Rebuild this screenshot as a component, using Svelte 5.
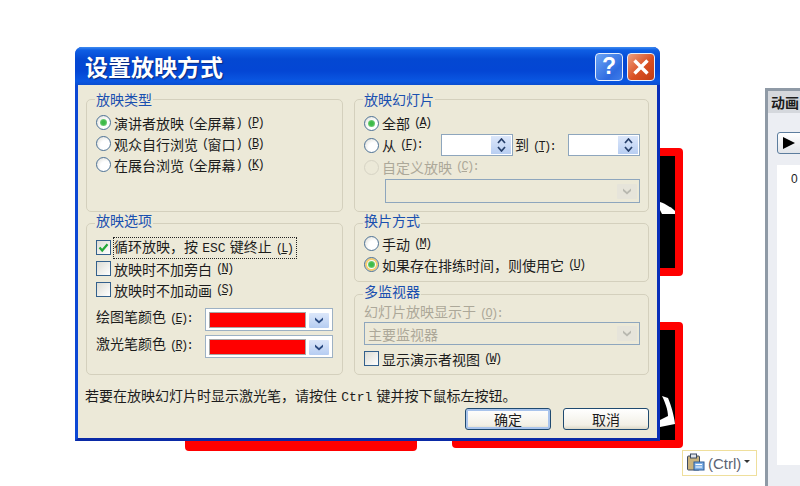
<script>
  const chevron = 'M1 1.5 L5 5 L9 1.5 L9 4 L5 7.5 L1 4 Z';
</script>

{#snippet arrow(disabled)}
  <span class="drop" class:off={disabled}>
    <svg width="10" height="9" viewBox="0 0 10 9" aria-hidden="true"><path d={chevron} fill={disabled ? '#b8b8b0' : '#2a4a80'} /></svg>
  </span>
{/snippet}

{#snippet spinner()}
  <span class="spin-field">
    <span class="spin">
      <svg width="9" height="6" viewBox="0 0 9 6"><path d="M1 5 L4.5 1 L8 5" fill="none" stroke="#27406b" stroke-width="1.7" /></svg>
      <svg width="9" height="6" viewBox="0 0 9 6"><path d="M1 1 L4.5 5 L8 1" fill="none" stroke="#27406b" stroke-width="1.7" /></svg>
    </span>
  </span>
{/snippet}

<main class="desk">
  <div class="shape shape-a"></div>
  <div class="shape shape-b"></div>
  <div class="shape shape-c"></div>
  <svg class="marks" width="30" height="250" viewBox="0 0 30 250" aria-hidden="true">
    <path d="M0 15 C6 17 12 21 15 24 L15 27 L2 27 L0 23 Z" fill="#fff" />
    <path d="M2 209 L8 211 C11 218 14 228 15 237 L0 240 L0 233 L8 229 C8 223 5 215 2 209 Z" fill="#fff" />
  </svg>

  <aside class="panel">
    <div class="panel-title">动画</div>
    <div class="panel-body">
      <div class="play"><span class="tri"></span></div>
      <div class="list">0</div>
    </div>
  </aside>

  <div class="paste">
    <svg width="20" height="20" viewBox="0 0 20 20" aria-hidden="true">
      <rect x="1.5" y="3" width="12" height="14" rx="1" fill="#c9b27c" stroke="#3c4a60" />
      <rect x="4.5" y="1" width="6" height="4" fill="#dfe3ea" stroke="#3c4a60" />
      <rect x="8" y="9" width="10" height="8" fill="#7fb0e6" stroke="#2d5a96" />
      <path d="M9.5 11.5 H16 M9.5 14 H16" stroke="#fff" />
    </svg>
    <span>(Ctrl)</span>
    <i class="caret"></i>
  </div>

  <section class="dialog">
    <header class="titlebar">
      <h1>设置放映方式</h1>
      <div class="caps">
        <span class="cap help">?</span>
        <span class="cap close">
          <svg width="18" height="18" viewBox="0 0 18 18" aria-hidden="true"><path d="M2.5 2.5 L15.5 15.5 M15.5 2.5 L2.5 15.5" stroke="#fff" stroke-width="3.4" /></svg>
        </span>
      </div>
    </header>

    <div class="body">
      <div class="cols">
        <div class="col">
          <fieldset class="h-type">
            <legend>放映类型</legend>
            <div class="row r21"><i class="radio on"></i>演讲者放映<span class="m">(</span>全屏幕<span class="m c">) (<u>P</u>)</span></div>
            <div class="row r21"><i class="radio"></i>观众自行浏览<span class="m">(</span>窗口<span class="m c">) (<u>B</u>)</span></div>
            <div class="row r21"><i class="radio"></i>在展台浏览<span class="m">(</span>全屏幕<span class="m c">) (<u>K</u>)</span></div>
          </fieldset>
          <fieldset class="h-opts">
            <legend>放映选项</legend>
            <div class="row r21"><i class="check on"><svg width="13" height="13" viewBox="0 0 13 13" aria-hidden="true"><path d="M2.5 6.5 L5.2 9.5 L10.5 3.2" fill="none" stroke="#22a838" stroke-width="2.2" /></svg></i><span class="focus">循环放映，按 <span class="esc">ESC</span> 键终止<span class="m">(<u>L</u>)</span></span></div>
            <div class="row r21"><i class="check"></i>放映时不加旁白<span class="m">(<u>N</u>)</span></div>
            <div class="row r21"><i class="check"></i>放映时不加动画<span class="m">(<u>S</u>)</span></div>
            <div class="color-row first"><span class="color-label">绘图笔颜色<span class="m">(<u>E</u>):</span></span><span class="color-combo"><span class="swatch"></span>{@render arrow(false)}</span></div>
            <div class="color-row"><span class="color-label">激光笔颜色<span class="m">(<u>R</u>):</span></span><span class="color-combo"><span class="swatch"></span>{@render arrow(false)}</span></div>
          </fieldset>
        </div>

        <div class="col">
          <fieldset class="h-type">
            <legend>放映幻灯片</legend>
            <div class="row r22"><i class="radio on"></i>全部<span class="m">(<u>A</u>)</span></div>
            <div class="row r22">
              <span class="from"><i class="radio"></i>从<span class="m">(<u>F</u>):</span></span>
              {@render spinner()}
              <span class="to">到<span class="m">(<u>T</u>):</span></span>
              {@render spinner()}
            </div>
            <div class="row r22 dim"><i class="radio off"></i>自定义放映<span class="m">(<u>C</u>):</span></div>
            <div class="wide-combo indent">{@render arrow(true)}</div>
          </fieldset>
          <fieldset class="h-adv">
            <legend>换片方式</legend>
            <div class="row r21"><i class="radio"></i>手动<span class="m">(<u>M</u>)</span></div>
            <div class="row r21"><i class="radio on amber"></i>如果存在排练时间，则使用它<span class="m">(<u>U</u>)</span></div>
          </fieldset>
          <fieldset class="h-mon">
            <legend>多监视器</legend>
            <div class="mon-label dim">幻灯片放映显示于<span class="m">(<u>O</u>):</span></div>
            <div class="wide-combo dim"><span class="combo-text">主要监视器</span>{@render arrow(true)}</div>
            <div class="row r21 mon-check"><i class="check"></i>显示演示者视图<span class="m">(<u>W</u>)</span></div>
          </fieldset>
        </div>
      </div>

      <p class="note">若要在放映幻灯片时显示激光笔，请按住 <span class="esc">Ctrl</span> 键并按下鼠标左按钮。</p>

      <div class="actions">
        <button type="button">确定</button>
        <button type="button">取消</button>
      </div>
    </div>
  </section>
</main>

<style>
  :global(body) { margin: 0; background: #fff; }

  .desk {
    position: relative;
    width: 800px;
    height: 486px;
    overflow: hidden;
    background: #fff;
    font-family: "Noto Sans CJK SC", "Liberation Sans", sans-serif;
    font-size: 14px;
    color: #1c1c1c;
  }

  .shape { position: absolute; background: #000; border: 8px solid #f00; border-radius: 4px; box-sizing: border-box; }
  .shape-a { left: 500px; top: 148px; width: 183px; height: 128px; }
  .shape-b { left: 452px; top: 322px; width: 231px; height: 126px; }
  .shape-c { left: 185px; top: 400px; width: 232px; height: 51px; background: #f00; }
  .marks { position: absolute; left: 660px; top: 187px; }

  .panel {
    position: absolute;
    left: 765px;
    top: 88px;
    width: 60px;
    height: 410px;
    box-sizing: border-box;
    border: 3px solid #8f9aa6;
    background: #eceef3;
  }
  .panel-title {
    height: 22px;
    padding-left: 3px;
    background: #d5d8dd;
    font-weight: 700;
    font-size: 14px;
    line-height: 23px;
    white-space: nowrap;
  }
  .panel-body { padding: 19px 0 0 9px; }
  .play {
    width: 40px;
    height: 20px;
    border: 1px solid #5c7d9e;
    border-radius: 3px;
    background: linear-gradient(#fff, #e2e5ea);
    display: flex;
    align-items: center;
    padding-left: 5px;
  }
  .tri { width: 0; height: 0; border-left: 12px solid #000; border-top: 6px solid transparent; border-bottom: 6px solid transparent; }
  .list {
    margin-top: 11px;
    height: 300px;
    background: #fff;
    font: 12px/28px "Liberation Sans", sans-serif;
    padding-left: 14px;
  }

  .paste {
    position: absolute;
    left: 682px;
    top: 450px;
    width: 75px;
    height: 26px;
    box-sizing: border-box;
    border: 1px solid #efdf9c;
    background: #fff;
    display: flex;
    align-items: center;
    padding-left: 3px;
    gap: 2px;
    font: 15px "Liberation Sans", sans-serif;
    color: #5c6472;
  }
  .caret { width: 0; height: 0; margin-left: 1px; margin-top: -3px; border-left: 3px solid transparent; border-right: 3px solid transparent; border-top: 3px solid #333; }

  .dialog {
    position: absolute;
    left: 75px;
    top: 47px;
    width: 585px;
    height: 394px;
    box-sizing: border-box;
    display: flex;
    flex-direction: column;
    border-radius: 7px 7px 0 0;
    background: #0a3fd0;
    border-bottom: 3px solid #0a2aa6;
    border-right: 3px solid #0a2fb8;
    border-left: 3px solid #0d48d4;
  }
  .titlebar {
    height: 38px;
    flex: none;
    margin: 0 -3px;
    padding: 0 5px 0 10px;
    display: flex;
    align-items: center;
    justify-content: space-between;
    border-radius: 7px 7px 0 0;
    background: linear-gradient(#3f8cf0 0, #0f5fe4 3px, #0448d2 12px, #0446d4 24px, #0a57e2 34px, #0a4ed0 100%);
  }
  h1 {
    margin: 0;
    font-size: 23px;
    line-height: 38px;
    font-weight: 700;
    color: #fff;
    text-shadow: 1px 1px 1px #0a2a80;
  }
  .caps { display: flex; gap: 4px; margin-top: 1px; }
  .cap {
    width: 28px;
    height: 28px;
    box-sizing: border-box;
    border: 1px solid #e6eefc;
    border-radius: 4px;
    display: flex;
    align-items: center;
    justify-content: center;
  }
  .help { background: linear-gradient(135deg, #6aa4f4, #2e6ae0 70%, #3f7eea); color: #fff; font: 700 23px "Liberation Sans", sans-serif; }
  .close { background: linear-gradient(135deg, #f0a080, #d94f22 55%, #c23c14); }

  .body { flex: 1; background: #ece9d8; display: flex; flex-direction: column; padding: 5px 8px 0 8px; min-height: 0; }
  .cols { display: flex; gap: 11px; }
  .col { display: flex; flex-direction: column; }
  .col:first-child { width: 257px; }
  .col:last-child { width: 295px; }

  fieldset {
    margin: 0;
    box-sizing: border-box;
    border: 1px solid #d4d0bd;
    border-radius: 5px;
    padding: 0 9px;
    min-width: 0;
  }
  legend {
    padding: 0 1px 2px;
    margin-left: -1px;
    color: #1a50b0;
    font-size: 14px;
    line-height: 16px;
  }
  .h-type legend { transform: translateY(1px); }
  .h-opts legend, .h-adv legend, .h-mon legend { transform: translateY(-2px); }
  .h-type { height: 122px; padding-top: 4px; }
  .h-opts { height: 161px; margin-top: 2px; padding-top: 5px; }
  .h-adv { height: 68px; margin-top: 2px; padding-top: 1px; }
  .h-mon { height: 90px; margin-top: 3px; padding-top: 0; }

  .row { display: flex; align-items: center; white-space: nowrap; line-height: 20px; }
  .r21 { height: 21px; }
  .r22 { height: 22px; }
  .dim { color: #aca899; }

  .m { font-family: "Liberation Mono", monospace; font-size: 12px; letter-spacing: -1.7px; white-space: pre; margin-left: 4px; }
  .m.c { margin-left: 0; }
  .esc { font-family: "Liberation Mono", monospace; font-size: 13px; margin: 0 1px; }

  .radio, .check { flex: none; display: inline-flex; align-items: center; justify-content: center; box-sizing: border-box; }
  .radio {
    width: 15px;
    height: 15px;
    margin-right: 3px;
    border: 1px solid #4d7296;
    border-radius: 50%;
    background: radial-gradient(circle at 65% 65%, #fff 40%, #d8d8d0);
  }
  .radio.on::after { content: ""; width: 7px; height: 7px; border-radius: 50%; background: radial-gradient(circle, #3dbb48 35%, #a4dca6); }
  .radio.amber { box-shadow: inset 0 0 0 2px #f4cc70; }
  .radio.off { border-color: #d6d3c4; background: #ece9d8; }
  .check {
    width: 15px;
    height: 15px;
    margin-right: 3px;
    border: 1px solid #33608c;
    background: linear-gradient(135deg, #dcdcd4, #fff);
  }
  .focus { outline: 1px dotted #222; outline-offset: 0; line-height: 17px; padding-right: 4px; }

  .color-row { display: flex; align-items: center; justify-content: space-between; height: 27px; }
  .color-row.first { margin-top: 6px; }
  .color-label { margin-top: -8px; }
  .color-combo {
    width: 128px;
    height: 23px;
    box-sizing: border-box;
    border: 1px solid #9db1c4;
    background: #fff;
    padding: 4px 3px 0 4px;
    display: flex;
    justify-content: space-between;
  }
  .swatch { width: 95px; height: 14px; background: #f00; outline: 1px solid #a8a8a8; }
  .drop {
    width: 20px;
    height: 15px;
    display: flex;
    align-items: center;
    justify-content: center;
    background: linear-gradient(#dce7fa, #b6cdf2);
    border-radius: 1px;
  }
  .drop.off { background: #e6e4da; }

  .from { display: flex; align-items: center; width: 77px; flex: none; }
  .spin-field {
    width: 72px;
    height: 22px;
    flex: none;
    box-sizing: border-box;
    border: 1px solid #8ea6bd;
    background: #fff;
    display: flex;
    justify-content: flex-end;
    padding: 1px;
  }
  .spin {
    width: 20px;
    background: linear-gradient(#dce7fa, #b8cef2);
    display: flex;
    flex-direction: column;
    align-items: center;
    justify-content: center;
    gap: 2px;
  }
  .spin svg { display: block; }
  .to { width: 53px; flex: none; padding-left: 2px; }
  .indent { margin-left: 21px; }
  .wide-combo {
    height: 24px;
    margin-top: 1px;
    width: 255px;
    box-sizing: border-box;
    border: 1px solid #8ea6bd;
    display: flex;
    align-items: center;
    justify-content: flex-end;
    padding-right: 2px;
    background: #ece9d8;
  }
  .h-mon .wide-combo { width: 276px; height: 23px; margin-top: 0; justify-content: space-between; padding-left: 3px; }
  .combo-text { color: #aca899; }
  .mon-label { line-height: 16px; }
  .mon-check { margin-top: 3px; }

  .note { margin: 10px 0 0 -1px; line-height: 20px; white-space: nowrap; }

  .actions { display: flex; justify-content: flex-end; gap: 12px; margin: 0; }
  button {
    width: 86px;
    height: 22px;
    padding: 0;
    border: 1px solid #1f4a70;
    border-radius: 3px;
    background: linear-gradient(#fff, #f2f0e6 80%, #dcd8c8);
    font: 14px/20px "Noto Sans CJK SC", sans-serif;
    color: #1c1c1c;
  }
  button:first-child { box-shadow: inset 0 0 0 2px #a9c4ec; }
</style>
